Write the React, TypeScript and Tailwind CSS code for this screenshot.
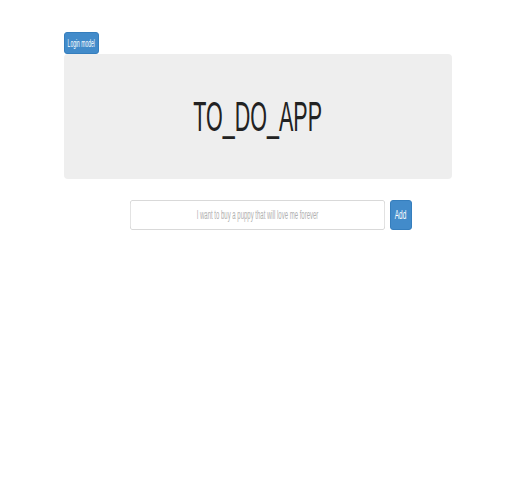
import React from "react";

// Text in the picture is squeezed sideways, so labels get a horizontal scale
const Squeezed = ({ children, className = "" }: { children: React.ReactNode; className?: string }) => (
  <span className={`inline-block scale-x-[0.5] whitespace-nowrap ${className}`}>{children}</span>
);

const App = () => {
  return (
    <div className="min-h-[500px] overflow-hidden bg-white font-['Liberation_Sans',Arial,sans-serif] text-[#333]">
      <div className="mx-auto w-[388px] pt-[32px]">
        {/* Login button */}
        <button className="flex h-[22px] w-[35px] items-center justify-center overflow-hidden rounded-[3px] border border-[#357ebd] bg-[#428bca] text-[10px] text-white">
          <Squeezed>Login model</Squeezed>
        </button>

        {/* Jumbotron */}
        <div className="flex h-[125px] items-center justify-center rounded-[4px] bg-[#eeeeee]">
          <Squeezed className="text-[43px] leading-none text-[#222]">TO_DO_APP</Squeezed>
        </div>

        {/* Add form */}
        <form className="mt-[21px] flex items-center gap-[5px] pl-[66px]">
          <div className="h-[30px] w-[255px] overflow-hidden">
            <input
              type="text"
              placeholder="I want to buy a puppy that will love me forever"
              className="h-[30px] w-[510px] origin-left scale-x-[0.5] rounded-[4px] border border-[#cccccc] bg-white px-3 text-center text-[12px] placeholder:text-[#b0b0b0] focus:outline-none"
            />
          </div>
          <button
            type="submit"
            className="flex h-[30px] w-[22px] items-center justify-center overflow-hidden rounded-[3px] border border-[#357ebd] bg-[#428bca] text-[13px] text-white"
          >
            <Squeezed>Add</Squeezed>
          </button>
        </form>
      </div>
    </div>
  );
};

export default App;
